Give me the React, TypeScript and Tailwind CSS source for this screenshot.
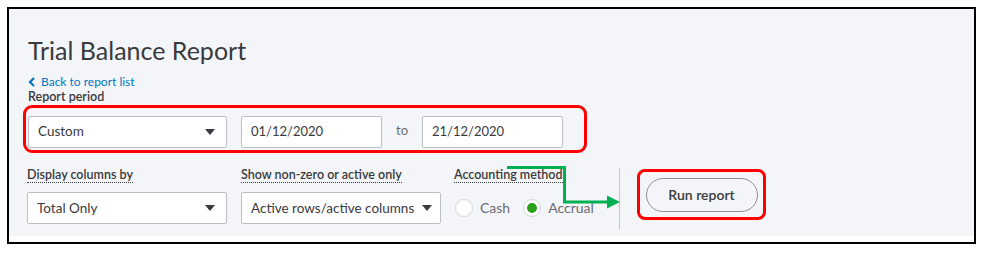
import React from 'react';

const Caret = () => (
  <svg width="10" height="6" viewBox="0 0 10 6" className="shrink-0 ml-[4px]">
    <path d="M0 0 L10 0 L5 6 Z" fill="#393a3d" />
  </svg>
);

const Select = ({ value, width, pr = 'pr-[11px]' }: { value: string; width: string; pr?: string }) => (
  <div
    className={`${width} ${pr} h-[32px] bg-white border border-[#babec5] rounded-[2px] flex items-center justify-between pl-[9px] text-[13.5px] text-[#393a3d]`}
  >
    <span className="whitespace-nowrap">{value}</span>
    <Caret />
  </div>
);

const DateInput = ({ value }: { value: string }) => (
  <div className="w-[141px] h-[32px] bg-white border border-[#babec5] rounded-[2px] flex items-center pl-[9px] text-[13px] text-[#393a3d]">
    {value}
  </div>
);

const FieldLabel = ({ children }: { children: React.ReactNode }) => (
  <span className="inline-block text-[12.5px] font-semibold text-[#393a3d] leading-[15px] border-b border-dotted border-[#393a3d]">
    {children}
  </span>
);

const Radio = ({ label, checked }: { label: string; checked?: boolean }) => (
  <label className="flex items-center gap-[7px] text-[14px] text-[#6b6c72]">
    <span className="w-[18px] h-[18px] rounded-full bg-white border border-[#d4d7dc] flex items-center justify-center">
      {checked && <span className="w-[10px] h-[10px] rounded-full bg-[#2ca01c]" />}
    </span>
    {label}
  </label>
);

export default function App() {
  return (
    <div className="relative w-[989px] h-[255px] bg-white pt-[7px] pl-[7px] font-['Lato',sans-serif]">
      <div className="w-[969px] h-[237px] border-2 border-black bg-white">
        <div className="h-[227px] bg-[#f4f5f8] pl-[19px] pt-[27px]">
          <h1 className="text-[25px] leading-[28px] text-[#393a3d]">Trial Balance Report</h1>

          <a className="mt-[11px] flex items-center gap-[6px] text-[12px] leading-[14px] text-[#0077c5]">
            <svg width="7" height="10" viewBox="0 0 7 10">
              <path d="M6 1 L2 5 L6 9" stroke="#0077c5" strokeWidth="2.2" fill="none" />
            </svg>
            Back to report list
          </a>
          <div className="mt-[1px] text-[12.5px] leading-[14px] font-semibold text-[#393a3d]">Report period</div>

          {/* period row, outlined in red */}
          <div className="-ml-[5px] mt-[1px] w-[564px] h-[48px] border-[3px] border-[#ff0000] rounded-[9px] flex items-center gap-[14px] pl-[2px] pt-[5px]">
            <Select value="Custom" width="w-[199px]" />
            <DateInput value="01/12/2020" />
            <span className="text-[13px] text-[#6b6c72] -mt-[2px]">to</span>
            <DateInput value="21/12/2020" />
          </div>

          {/* options row */}
          <div className="mt-[8px] flex items-start">
            <div className="-ml-[1px] w-[200px]">
              <FieldLabel>Display columns by</FieldLabel>
              <div className="mt-[7px]">
                <Select value="Total Only" width="w-[200px]" />
              </div>
            </div>
            <div className="ml-[14px] w-[200px]">
              <FieldLabel>Show non-zero or active only</FieldLabel>
              <div className="mt-[7px]">
                <Select value="Active rows/active columns" width="w-[200px]" pr="pr-[8px]" />
              </div>
            </div>
            <div className="ml-[13px] w-[165px]">
              <FieldLabel>Accounting method</FieldLabel>
              <div className="mt-[12px] flex items-center gap-[13px] pl-[1px]">
                <Radio label="Cash" />
                <Radio label="Accrual" checked />
              </div>
            </div>
            <div className="w-px h-[61px] mt-[7px] bg-[#c4c6cb]" />
            <div className="ml-[17px] mt-[8px] w-[129px] h-[51px] border-[3px] border-[#ff0000] rounded-[8px] flex items-center justify-center">
              <button className="w-[112px] h-[34px] rounded-full border border-[#8d9096] text-[14px] font-semibold text-[#393a3d]">
                Run report
              </button>
            </div>
          </div>
        </div>
      </div>

      {/* green annotation arrow */}
      <svg className="absolute left-0 top-0 pointer-events-none" width="989" height="255">
        <path d="M507 167.5 L564.5 167.5 L564.5 202 L608 202" stroke="#00b050" strokeWidth="3" fill="none" />
        <path d="M607 195.5 L620 202 L607 208.5 Z" fill="#00b050" />
      </svg>
    </div>
  );
}
